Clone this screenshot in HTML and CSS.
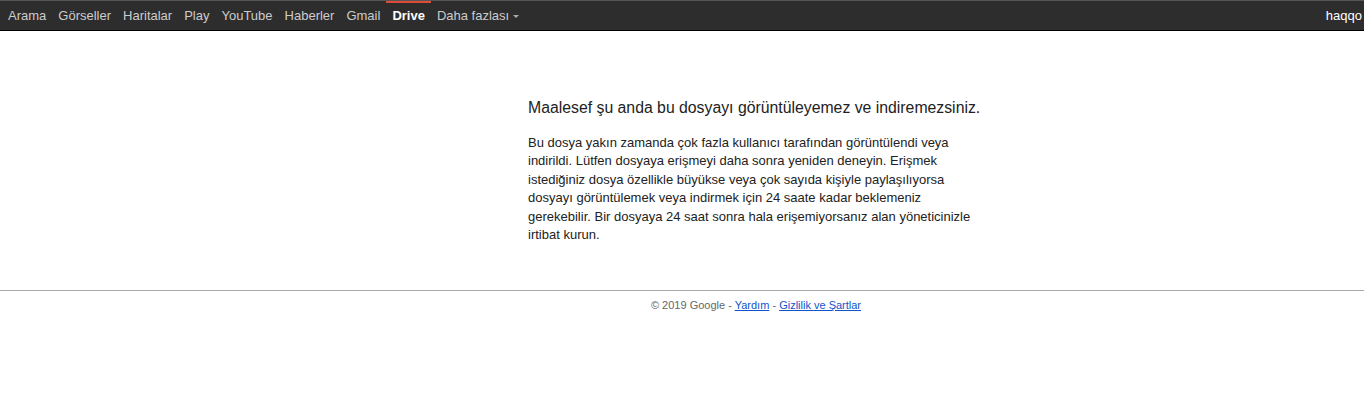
FILE: index.html
```html
<!DOCTYPE html>
<html lang="tr">
<head>
  <meta charset="UTF-8">
  <title>Google Drive - Sanal Kontrol</title>
  <link rel="stylesheet" href="styles.css">
</head>
<body>

  <!-- Top bar -->
  <div class="gbar">
    <div class="gbar-links">
      <a href="#">Arama</a>
      <a href="#">Görseller</a>
      <a href="#">Haritalar</a>
      <a href="#">Play</a>
      <a href="#">YouTube</a>
      <a href="#">Haberler</a>
      <a href="#">Gmail</a>
      <a href="#" class="active">Drive</a>
      <a href="#" class="more">Daha fazlası <span class="caret"></span></a>
    </div>
    <div class="gbar-user">haqqo</div>
  </div>

  <!-- Message -->
  <div class="content">
    <div class="message">
      <h2>Maalesef şu anda bu dosyayı görüntüleyemez ve indiremezsiniz.</h2>
      <p>Bu dosya yakın zamanda çok fazla kullanıcı tarafından görüntülendi veya indirildi. Lütfen dosyaya erişmeyi daha sonra yeniden deneyin. Erişmek istediğiniz dosya özellikle büyükse veya çok sayıda kişiyle paylaşılıyorsa dosyayı görüntülemek veya indirmek için 24 saate kadar beklemeniz gerekebilir. Bir dosyaya 24 saat sonra hala erişemiyorsanız alan yöneticinizle irtibat kurun.</p>
    </div>
  </div>

  <!-- Footer -->
  <div class="footer">
    &copy; 2019 Google - <a href="#">Yardım</a> - <a href="#">Gizlilik ve Şartlar</a>
  </div>

</body>
</html>
```

FILE: styles.css
```css
* { margin: 0; padding: 0; box-sizing: border-box; }
body {
  font-family: "Liberation Sans", Arial, sans-serif;
  background: #fff;
  color: #222;
  overflow: hidden;
}
.gbar {
  display: flex;
  justify-content: space-between;
  align-items: stretch;
  height: 31px;
  background: #2d2d2d;
  border-top: 1px solid #555;
  border-bottom: 1px solid #000;
  overflow: hidden;
}
.gbar-links { display: flex; padding-left: 2px; }
.gbar-links a {
  position: relative;
  display: flex;
  align-items: center;
  padding: 0 6px 1px;
  color: #ccc;
  font-size: 13px;
  text-decoration: none;
}
.gbar-links a.active { color: #fff; font-weight: bold; }
.gbar-links a.active::before {
  content: "";
  position: absolute;
  left: 0;
  right: 0;
  top: -1px;
  height: 3px;
  background: #dd4b39;
}
.caret {
  display: inline-block;
  margin-left: 4px;
  margin-top: 2px;
  border-left: 3px solid transparent;
  border-right: 3px solid transparent;
  border-top: 3px solid #aaa;
}
.gbar-user {
  display: flex;
  align-items: center;
  color: #fff;
  font-size: 13px;
  padding: 0 2px 1px 0;
}
.content { padding: 68px 0 0 528px; height: 260px; border-bottom: 1px solid #aaa; }
.message { width: 448px; }
.message h2 {
  font-size: 15.8px;
  font-weight: normal;
  color: #222;
  white-space: nowrap;
  margin-bottom: 17px;
}
.message p { font-size: 13px; line-height: 18.4px; color: #222; }
.footer {
  text-align: center;
  font-size: 11px;
  color: #666;
  padding: 8px 0 0 148px;
}
.footer a { color: #15c; text-decoration: underline; }
```
